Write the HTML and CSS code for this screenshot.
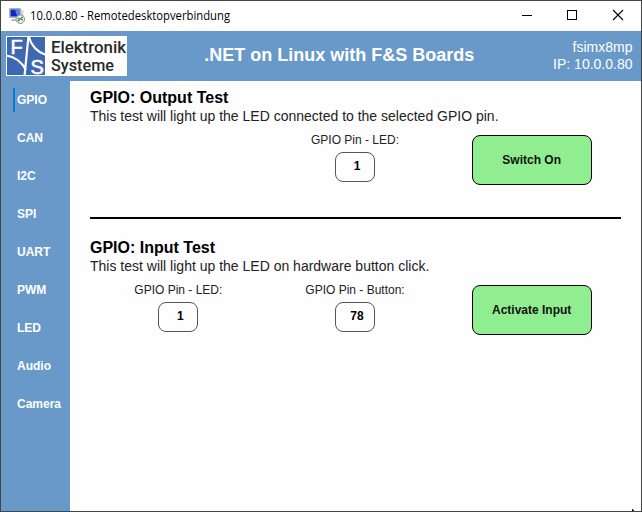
FILE: index.html
```html
<!DOCTYPE html>
<html lang="en">
<head>
<meta charset="utf-8">
<title>10.0.0.80 - Remotedesktopverbindung</title>
<link rel="stylesheet" href="styles.css">
</head>
<body>
<div class="window">
  <div class="titlebar">
    <svg class="app-icon" width="16" height="16" viewBox="0 0 16 16">
      <path d="M.5.5h11v9H.5z" fill="#c9d3df" stroke="#a9b3c0"/>
      <path d="M1.5 1.5h9v7h-9z" fill="#1027bd"/>
      <path d="M6 1.5h4.5v5L8 8z" fill="#5b83ee"/>
      <path d="M12 2h2.500v6H12z" fill="#d9d9d9"/>
      <path d="M3 11h5v2H2z" fill="#b7bdc4"/>
      <circle cx="11.300" cy="11.200" r="4.300" fill="#eef0ee" stroke="#8b8f8b"/>
      <path d="M8.700 9.900l2 1.700-2 1.700M13.800 8.900l-2 1.700 2 1.700" fill="none" stroke="#2f8f3a" stroke-width="1.300"/>
    </svg>
    <svg class="caption" width="210" height="20"><text x="0" y="14" textLength="200" lengthAdjust="spacingAndGlyphs">10.0.0.80 - Remotedesktopverbindung</text></svg>
    <svg class="controls" width="138" height="30" viewBox="0 0 138 30" fill="none" stroke="#000" shape-rendering="crispEdges">
      <path d="M19 14.500h10"/>
      <path d="M64.500 9.500h9v9h-9z"/>
      <path d="M110 9l10 10M120 9l-10 10" stroke-width="1.100" shape-rendering="auto"/>
    </svg>
  </div>
  <header class="header">
    <svg class="logo" width="121" height="40" viewBox="0 0 121 40">
      <path d="M0 0h121v40H0z" fill="#fff"/>
      <path d="M1 1h38v38H1z" fill="#3f68b2"/>
      <path d="M0 19.500C8 20.500 15 25 20 34M18.500 40L22.500 0C25 9 31 16 40 19" fill="none" stroke="#fff" stroke-width="2.200"/>
      <text class="logo-mark" x="4.500" y="17.500">F</text>
      <text class="logo-mark" x="24.500" y="37.500">S</text>
      <text class="logo-name" x="45" y="16.500" textLength="75" lengthAdjust="spacingAndGlyphs">Elektronik</text>
      <text class="logo-name" x="45" y="34.500" textLength="63" lengthAdjust="spacingAndGlyphs">Systeme</text>
    </svg>
    <h1>.NET on Linux with F&amp;S Boards</h1>
    <div class="device">fsimx8mp<br>IP: 10.0.0.80</div>
  </header>
  <div class="body">
    <nav class="sidebar">
      <a class="active">GPIO</a>
      <a>CAN</a>
      <a>I2C</a>
      <a>SPI</a>
      <a>UART</a>
      <a>PWM</a>
      <a>LED</a>
      <a>Audio</a>
      <a>Camera</a>
    </nav>
    <main class="content">
      <section>
        <h2>GPIO: Output Test</h2>
        <p class="description">This test will light up the LED connected to the selected GPIO pin.</p>
        <div class="controls-row">
          <div class="field middle"><span class="label">GPIO Pin - LED:</span><span class="entry">1</span></div>
          <button>Switch On</button>
        </div>
      </section>
      <hr>
      <section>
        <h2>GPIO: Input Test</h2>
        <p class="description">This test will light up the LED on hardware button click.</p>
        <div class="controls-row">
          <div class="field"><span class="label">GPIO Pin - LED:</span><span class="entry">1</span></div>
          <div class="field"><span class="label">GPIO Pin - Button:</span><span class="entry">78</span></div>
          <button>Activate Input</button>
        </div>
      </section>
    </main>
  </div>
  <svg class="pointer" width="2" height="2"><path d="M0 0h1v1h1v1H0z"/></svg>
</div>
</body>
</html>
```
FILE: styles.css
```css
* { box-sizing: border-box; }

body {
  margin: 0;
  font-family: "Liberation Sans", Arial, sans-serif;
}

.window {
  position: relative;
  width: 642px;
  height: 512px;
  border: 1px solid #444446;
  background: #fefefe;
  display: flex;
  flex-direction: column;
  overflow: hidden;
}

.titlebar {
  height: 30px;
  flex: none;
  display: flex;
  align-items: center;
  padding-left: 8px;
  background: #fff;
}

.app-icon { margin-right: 5px; }

.caption {
  font: 12px "Open Sans", "Noto Sans", sans-serif;
  overflow: visible;
}

.controls { margin-left: auto; }

.header {
  height: 50px;
  flex: none;
  display: grid;
  grid-template-columns: 121px 1fr 81px;
  align-items: center;
  padding: 0 8.500px 0 5px;
  background: #6899c9;
  color: #fff;
}

.logo { overflow: visible; }

.logo-mark {
  font: 500 20px "Liberation Sans", sans-serif;
  fill: #fff;
  stroke: #fff;
  stroke-width: 0.6px;
}

.logo-name {
  font: 500 17px Roboto, sans-serif;
  fill: #2a2a2a;
}

h1 {
  margin: 0 0 2px;
  font-size: 18px;
  line-height: 20px;
  text-align: center;
}

.device {
  font-size: 14px;
  line-height: 17px;
  text-align: right;
  white-space: nowrap;
}

.body {
  flex: 1;
  display: flex;
}

.sidebar {
  width: 69px;
  flex: none;
  padding-left: 12px;
  background: #6899c9;
}

.sidebar a {
  display: block;
  height: 24px;
  margin: 7px 0 14px;
  padding-left: 2px;
  border-left: 2px solid transparent;
  color: #fff;
  font-size: 12px;
  font-weight: bold;
  line-height: 24px;
}

.sidebar .active { border-color: #0878d0; }

.content {
  flex: 1;
  padding: 7px 20px 0;
}

h2 {
  margin: 0;
  font-size: 16px;
  line-height: 19px;
}

.description {
  margin: 0;
  font-size: 14px;
  line-height: 18px;
  color: #222;
}

.controls-row {
  display: grid;
  grid-template-columns: repeat(3, 1fr);
  justify-items: center;
  padding: 10px 1px 0 0;
}

.middle { grid-column: 2; }

.field {
  display: flex;
  flex-direction: column;
  align-items: center;
  font-size: 12px;
}

.label {
  height: 17px;
  line-height: 11px;
  color: #222;
}

.entry {
  width: 40px;
  height: 30px;
  padding-left: 4px;
  border: 1px solid #555;
  border-radius: 8px;
  font-weight: bold;
  line-height: 27px;
  text-align: center;
}

button {
  width: 120px;
  height: 50px;
  border: 1px solid #000;
  border-radius: 8px;
  background: #90ee90;
  color: #111;
  font: bold 12px "Liberation Sans", Arial, sans-serif;
}

hr {
  height: 2px;
  margin: 32px 0 19px;
  border: 0;
  background: #000;
}

.pointer {
  position: absolute;
  right: 7px;
  bottom: 0;
}
```
